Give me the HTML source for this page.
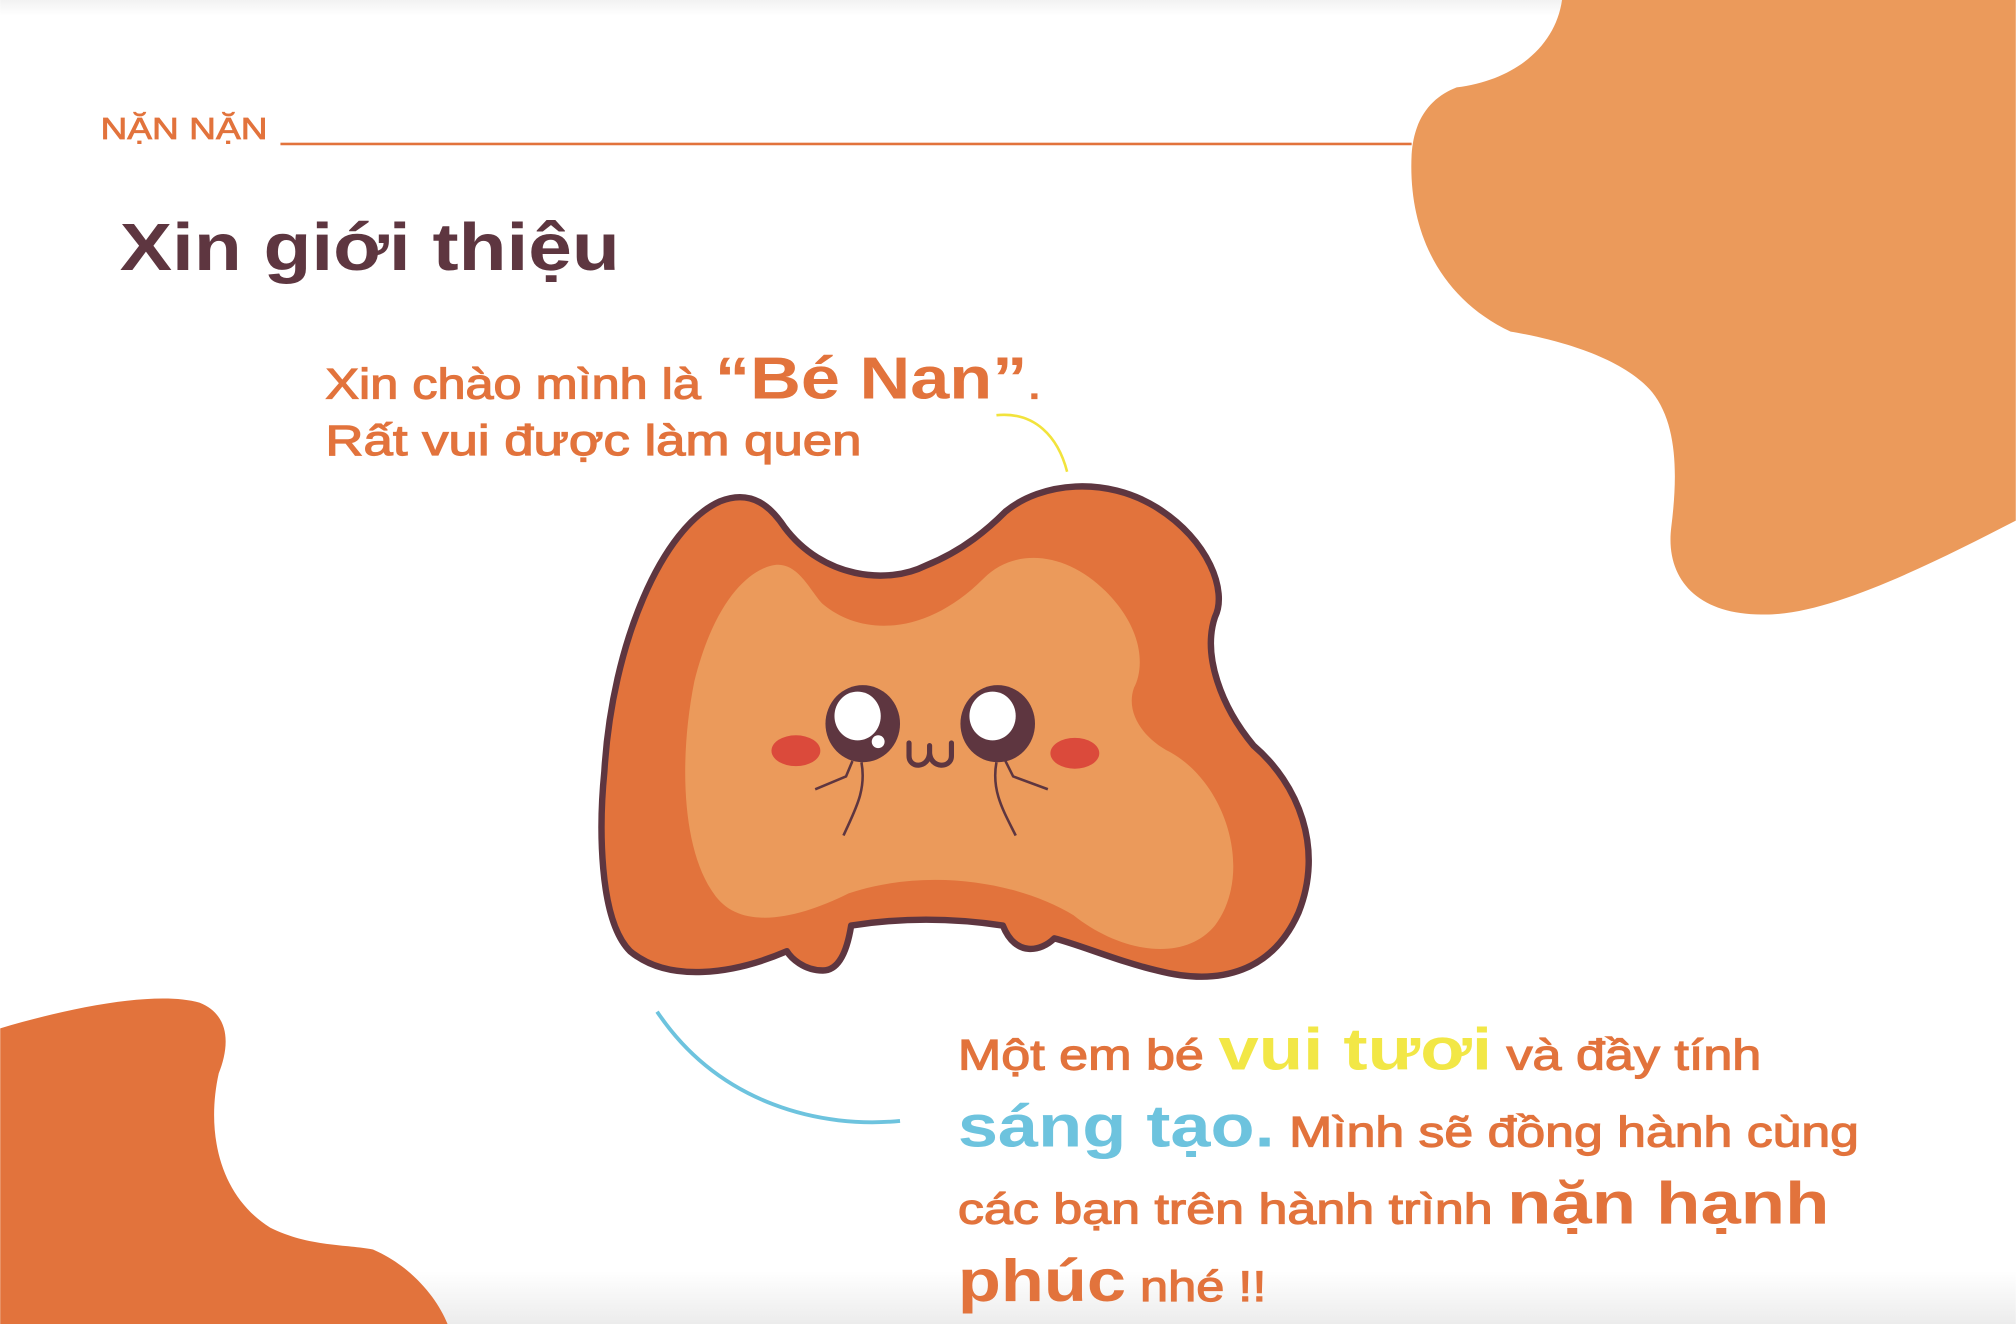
<!DOCTYPE html>
<html><head><meta charset="utf-8"><style>
html,body{margin:0;padding:0;background:#fff;}
svg{display:block;}
text{font-family:"Liberation Sans","DejaVu Sans",sans-serif;}
.m{stroke:#E2733C;stroke-width:0.9;}
</style></head><body>
<svg width="2016" height="1324" viewBox="0 0 1568 1030" xmlns="http://www.w3.org/2000/svg">
<defs>
<linearGradient id="bg" x1="0" y1="0" x2="0" y2="1">
<stop offset="0" stop-color="#f2f2f2"/><stop offset="0.012" stop-color="#fff"/><stop offset="0.96" stop-color="#fff"/><stop offset="1" stop-color="#ececec"/>
</linearGradient>
</defs>
<rect width="1568" height="1030" fill="url(#bg)"/>
<path d="M1215 0 L1568 0 L1568 405 C1500 440,1420 480,1370 478 C1320 478,1295 450,1300 410 C1305 370,1305 330,1285 305 C1260 275,1200 262,1175 258 C1120 232,1095 180,1098 120 C1100 90,1115 75,1133 68 C1180 62,1210 35,1215 0 Z" fill="#EB9A5B"/>
<path d="M0 800 C50 785,120 770,155 780 C180 790,178 815,170 835 C160 880,170 930,210 955 C240 970,270 968,290 972 C320 985,340 1010,348 1030 L0 1030 Z" fill="#E2733C"/>
<text x="78" y="108" font-size="24" fill="#E2733C" stroke="#E2733C" stroke-width="0.6" textLength="130" lengthAdjust="spacingAndGlyphs">NẶN NẶN</text>
<rect x="218" y="111" width="880" height="2" fill="#E2733C"/>
<text x="93" y="210" font-size="52" font-weight="bold" fill="#5E3640" textLength="389" lengthAdjust="spacingAndGlyphs">Xin giới thiệu</text>
<text x="253" y="310" font-size="33" fill="#E2733C" textLength="557" lengthAdjust="spacingAndGlyphs"><tspan class="m">Xin chào mình là </tspan><tspan font-size="46" font-weight="bold">“Bé Nan”</tspan><tspan class="m">.</tspan></text>
<text x="253" y="354" font-size="33" fill="#E2733C" class="m" textLength="417" lengthAdjust="spacingAndGlyphs">Rất vui được làm quen</text>
<path d="M775 323 C805 320,823 340,830 367" fill="none" stroke="#F2E33C" stroke-width="2"/>
<path d="M511 787 C560 860,640 878,700 872" fill="none" stroke="#6DC3DE" stroke-width="3"/>
<path d="M612 740 C570 758,520 765,490 740 C465 715,466 640,470 600 C476 500,515 410,560 390 C585 380,600 395,610 410 C640 450,690 455,720 440 C750 428,770 410,782 398 C810 375,860 370,900 395 C940 420,955 460,945 480 C935 510,950 550,975 580 C1010 610,1030 660,1010 710 C990 755,950 768,900 755 C870 748,840 735,820 730 C810 740,790 745,780 720 C740 714,700 714,662 720 C658 745,650 755,640 755 C625 755,615 745,612 740 Z" fill="#E2733C" stroke="#5E3640" stroke-width="5" stroke-linejoin="round"/>
<path d="M600 440 C620 435,630 460,640 470 C670 495,720 495,765 450 C790 425,830 430,860 460 C890 490,890 520,882 535 C875 555,890 575,910 585 C955 610,975 680,945 720 C920 750,870 740,835 712 C790 685,720 675,660 695 C620 715,575 725,555 695 C530 660,528 590,540 530 C555 470,580 445,600 440 Z" fill="#EB9A5B"/>
<ellipse cx="671" cy="563" rx="29" ry="30" fill="#5E3640"/>
<ellipse cx="667" cy="557" rx="18" ry="19" fill="#fff"/>
<circle cx="683" cy="577" r="5" fill="#fff"/>
<ellipse cx="776" cy="563" rx="29" ry="30" fill="#5E3640"/>
<ellipse cx="772" cy="557" rx="18" ry="19" fill="#fff"/>
<ellipse cx="619" cy="584" rx="19" ry="12" fill="#DB4A3B"/>
<ellipse cx="836" cy="586" rx="19" ry="12" fill="#DB4A3B"/>
<path d="M707 578 V588 C707 598,722 598,723 586 C724 598,740 598,740 588 V578 M723 580 V586" fill="none" stroke="#5E3640" stroke-width="4" stroke-linecap="round"/>
<path d="M663 592 L658 604 L634 614 M670 593 C674 615,665 630,656 650" fill="none" stroke="#5E3640" stroke-width="2"/>
<path d="M782 592 L788 604 L815 614 M775 593 C771 615,780 630,790 650" fill="none" stroke="#5E3640" stroke-width="2"/>
<text x="745" y="832" font-size="33" fill="#E2733C" textLength="625" lengthAdjust="spacingAndGlyphs"><tspan class="m">Một em bé </tspan><tspan fill="#F2E746" font-size="46" font-weight="bold">vui tươi</tspan><tspan class="m"> và đầy tính</tspan></text>
<text x="745" y="892" font-size="33" fill="#E2733C" textLength="701" lengthAdjust="spacingAndGlyphs"><tspan fill="#6DC3DE" font-size="46" font-weight="bold">sáng tạo.</tspan><tspan class="m"> Mình sẽ đồng hành cùng</tspan></text>
<text x="745" y="952" font-size="33" fill="#E2733C" textLength="678" lengthAdjust="spacingAndGlyphs"><tspan class="m">các bạn trên hành trình </tspan><tspan font-size="46" font-weight="bold">nặn hạnh</tspan></text>
<text x="745" y="1012" font-size="33" fill="#E2733C" textLength="240" lengthAdjust="spacingAndGlyphs"><tspan font-size="46" font-weight="bold">phúc</tspan><tspan class="m"> nhé !!</tspan></text>
</svg>
</body></html>
